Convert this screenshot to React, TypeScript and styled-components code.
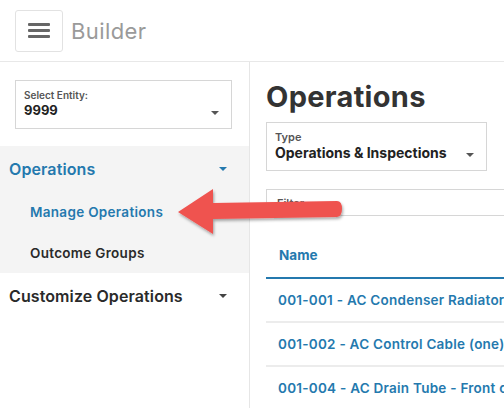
import React from "react";
import styled, { createGlobalStyle } from "styled-components";

const GlobalStyle = createGlobalStyle`
    html, body {
        margin: 0;
        padding: 0;
        background: #fff;
        font-family: Inter, "Open Sans", sans-serif;
        color: #333;
        overflow: hidden;
    }
`;

const BLUE = "#2479ae";

const Page = styled.div`
    position: relative;
    width: 504px;
    height: 408px;
    overflow: hidden;
`;

const Header = styled.header`
    height: 61px;
    border-bottom: 1px solid #e8e8e8;
    display: flex;
    align-items: center;
    padding-left: 15px;
    gap: 8px;
`;

const MenuButton = styled.div`
    width: 46px;
    height: 40px;
    border: 1px solid #e2e2e2;
    border-radius: 3px;
    display: flex;
    flex-direction: column;
    justify-content: center;
    align-items: center;
    gap: 3px;
`;

const Bar = styled.span`
    width: 22px;
    height: 3px;
    background: #666;
    border-radius: 1px;
`;

const Title = styled.span`
    font-size: 22px;
    color: #9a9a9a;
    letter-spacing: 0.4px;
`;

const Body = styled.div`
    display: grid;
    grid-template-columns: 250px 1fr;
    height: 346px;
`;

const Sidebar = styled.aside`
    border-right: 1px solid #e6e6e6;
    padding-top: 18px;
`;

const SelectBox = styled.div<{ $width: number; $left: number }>`
    margin-left: ${(p) => p.$left}px;
    width: ${(p) => p.$width}px;
    height: 49px;
    border: 1px solid #d6d6d6;
    display: flex;
    flex-direction: column;
    justify-content: center;
    padding: 0 8px;
    box-sizing: border-box;
    position: relative;
`;

const SelectLabel = styled.span<{ $size: number }>`
    font-size: ${(p) => p.$size}px;
    font-weight: 600;
    color: #555;
    line-height: 1.3;
`;

const SelectValue = styled.span<{ $size: number }>`
    font-size: ${(p) => p.$size}px;
    font-weight: 700;
    color: #222;
    line-height: 1.35;
`;

const Caret = styled.span<{ $color?: string }>`
    width: 0;
    height: 0;
    border-left: 4px solid transparent;
    border-right: 4px solid transparent;
    border-top: 4px solid ${(p) => p.$color || "#555"};
`;

const SelectCaret = styled(Caret)`
    position: absolute;
    right: 12px;
    bottom: 13px;
`;

const Section = styled.div<{ $open?: boolean }>`
    margin-top: 17px;
    background: ${(p) => (p.$open ? "#f4f4f4" : "transparent")};
`;

const SectionHead = styled.div<{ $active?: boolean }>`
    height: 45px;
    display: flex;
    align-items: center;
    justify-content: space-between;
    padding: 0 22px 0 9px;
    font-size: 16px;
    font-weight: 600;
    letter-spacing: 0.1px;
    color: ${(p) => (p.$active ? BLUE : "#2a2a2a")};
`;

const NavItem = styled.div<{ $active?: boolean }>`
    height: 41px;
    display: flex;
    align-items: center;
    padding-left: 30px;
    font-size: 13.5px;
    font-weight: 600;
    letter-spacing: 0.3px;
    color: ${(p) => (p.$active ? BLUE : "#2a2a2a")};
`;

const Main = styled.main`
    padding: 18px 0 0 16px;
    overflow: hidden;
`;

const Heading = styled.h1`
    margin: 0;
    font-size: 29px;
    font-weight: 700;
    letter-spacing: 0.3px;
    color: #333;
    height: 42px;
    line-height: 34px;
`;

const FilterBox = styled.div`
    margin-top: 18px;
    height: 27px;
    border: 1px solid #d6d6d6;
    border-right: none;
    padding: 6px 10px 0;
    box-sizing: border-box;
    font-size: 11px;
    font-weight: 600;
    color: #555;
`;

const Table = styled.div`
    margin-top: 16px;
`;

const HeadRow = styled.div`
    height: 45px;
    display: flex;
    align-items: center;
    padding-left: 13px;
    font-size: 13.5px;
    font-weight: 700;
    color: ${BLUE};
    border-bottom: 2px solid ${BLUE};
`;

const Row = styled.div`
    height: 44px;
    display: flex;
    align-items: center;
    padding: 0 0 1px 12px;
    box-sizing: border-box;
    font-size: 13.5px;
    font-weight: 600;
    letter-spacing: 0.25px;
    color: ${BLUE};
    white-space: nowrap;
    border-bottom: 2px solid #ececec;
`;

const Arrow = styled.svg`
    position: absolute;
    left: 170px;
    top: 176px;
    overflow: visible;
`;

const rows = [
    "001-001 - AC Condenser Radiator",
    "001-002 - AC Control Cable (one)",
    "001-004 - AC Drain Tube - Front of Dash",
];

export default function App(): React.ReactElement {
    return (
        <Page>
            <GlobalStyle />
            <Header>
                <MenuButton>
                    <Bar />
                    <Bar />
                    <Bar />
                </MenuButton>
                <Title>Builder</Title>
            </Header>
            <Body>
                <Sidebar>
                    <SelectBox $left={15} $width={217}>
                        <SelectLabel $size={10}>Select Entity:</SelectLabel>
                        <SelectValue $size={13}>9999</SelectValue>
                        <SelectCaret />
                    </SelectBox>
                    <Section $open>
                        <SectionHead $active>
                            Operations
                            <Caret $color={BLUE} />
                        </SectionHead>
                        <NavItem $active>Manage Operations</NavItem>
                        <NavItem>Outcome Groups</NavItem>
                    </Section>
                    <SectionHead>
                        Customize Operations
                        <Caret $color="#444" />
                    </SectionHead>
                </Sidebar>
                <Main>
                    <Heading>Operations</Heading>
                    <SelectBox $left={0} $width={221}>
                        <SelectLabel $size={11}>Type</SelectLabel>
                        <SelectValue $size={14}>
                            Operations &amp; Inspections
                        </SelectValue>
                        <SelectCaret />
                    </SelectBox>
                    <FilterBox>Filter</FilterBox>
                    <Table>
                        <HeadRow>Name</HeadRow>
                        {rows.map((r) => (
                            <Row key={r}>{r}</Row>
                        ))}
                    </Table>
                </Main>
            </Body>
            <Arrow width="180" height="64" viewBox="0 0 180 64">
                <defs>
                    <filter id="sh" x="-10%" y="-20%" width="130%" height="150%">
                        <feDropShadow dx="1" dy="2" stdDeviation="1.6" floodColor="#000" floodOpacity="0.35" />
                    </filter>
                </defs>
                <path
                    d="M8 36 L43 13 L43 27 L167 25 Q172 25 172 33 Q172 40 167 41 L43 43 L43 58 Z"
                    fill="#ef5350"
                    filter="url(#sh)"
                />
            </Arrow>
        </Page>
    );
}
